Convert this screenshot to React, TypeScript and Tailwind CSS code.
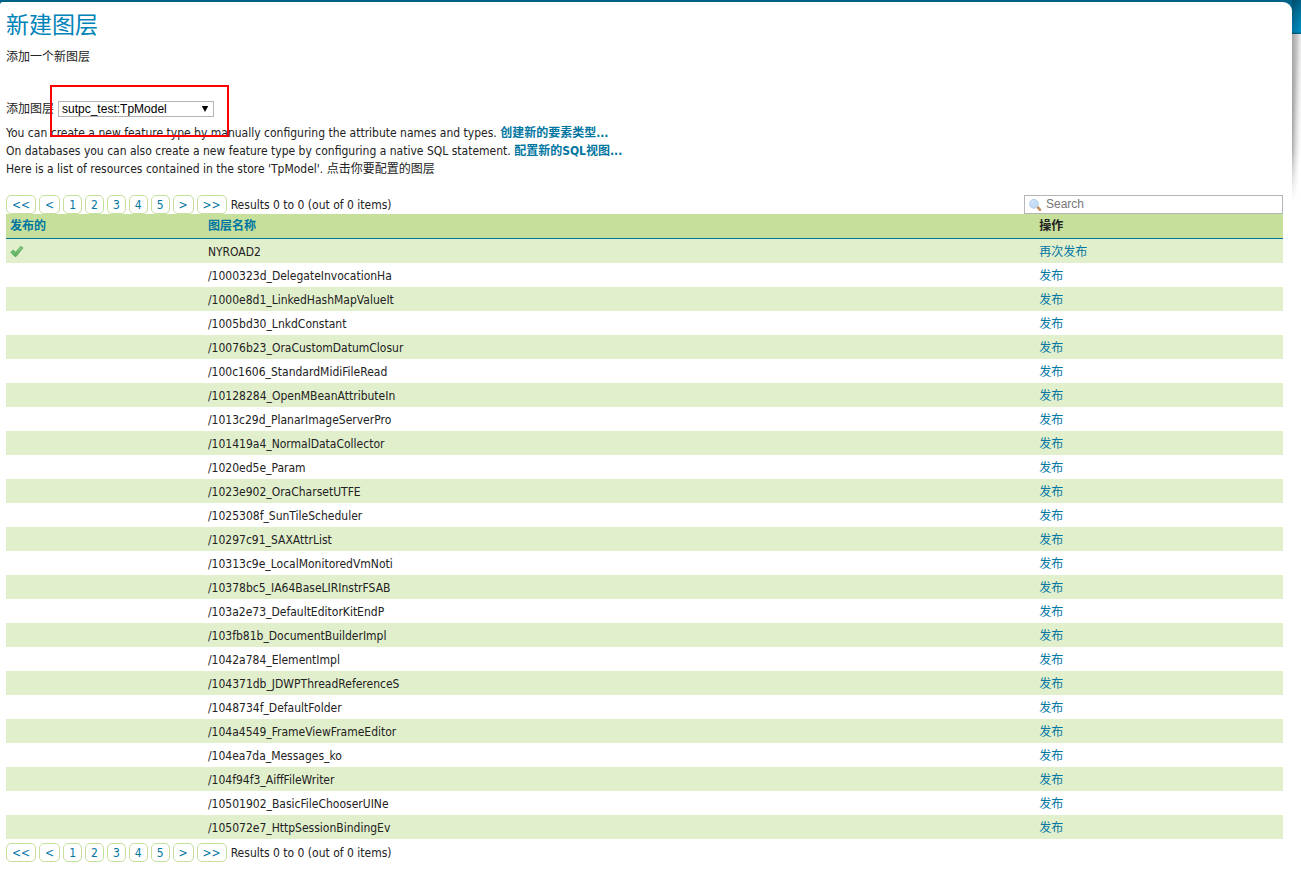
type Layer = { name: string; published?: boolean };

const layers: Layer[] = [
  { name: "NYROAD2", published: true },
  { name: "/1000323d_DelegateInvocationHa" },
  { name: "/1000e8d1_LinkedHashMapValueIt" },
  { name: "/1005bd30_LnkdConstant" },
  { name: "/10076b23_OraCustomDatumClosur" },
  { name: "/100c1606_StandardMidiFileRead" },
  { name: "/10128284_OpenMBeanAttributeIn" },
  { name: "/1013c29d_PlanarImageServerPro" },
  { name: "/101419a4_NormalDataCollector" },
  { name: "/1020ed5e_Param" },
  { name: "/1023e902_OraCharsetUTFE" },
  { name: "/1025308f_SunTileScheduler" },
  { name: "/10297c91_SAXAttrList" },
  { name: "/10313c9e_LocalMonitoredVmNoti" },
  { name: "/10378bc5_IA64BaseLIRInstrFSAB" },
  { name: "/103a2e73_DefaultEditorKitEndP" },
  { name: "/103fb81b_DocumentBuilderImpl" },
  { name: "/1042a784_ElementImpl" },
  { name: "/104371db_JDWPThreadReferenceS" },
  { name: "/1048734f_DefaultFolder" },
  { name: "/104a4549_FrameViewFrameEditor" },
  { name: "/104ea7da_Messages_ko" },
  { name: "/104f94f3_AiffFileWriter" },
  { name: "/10501902_BasicFileChooserUINe" },
  { name: "/105072e7_HttpSessionBindingEv" },
];

const pages = ["<<", "<", "1", "2", "3", "4", "5", ">", ">>"];

function Pager() {
  return (
    <nav className="flex items-center gap-[3px]">
      {pages.map((p) => (
        <a
          key={p}
          href="#"
          className="rounded-[5px] border border-[#c6e09b] px-[5px] pt-px leading-4 text-[#0076a1]"
        >
          {p}
        </a>
      ))}
      <span className="pl-px">Results 0 to 0 (out of 0 items)</span>
    </nav>
  );
}

function CheckIcon() {
  return (
    <svg viewBox="0 0 16 16" className="block size-4" role="img" aria-label="已发布">
      <defs>
        <linearGradient id="tick" x1="0" y1="0" x2="0" y2="1">
          <stop offset="0" stopColor="#8fd08a" />
          <stop offset="1" stopColor="#4fae52" />
        </linearGradient>
      </defs>
      <path
        d="M0.8 8.2 L3.2 6.1 L5.6 8.2 L10.8 2.3 L13 3.9 L6 12.6 L5 12.6 Z"
        fill="url(#tick)"
        stroke="#56a459"
        strokeWidth="0.8"
        strokeLinejoin="round"
      />
    </svg>
  );
}

function SearchIcon() {
  return (
    <svg viewBox="0 0 16 16" className="size-4" aria-hidden="true">
      <path d="M9.6 10.2 L12 12.8" stroke="#c4905a" strokeWidth="2.6" strokeLinecap="round" />
      <circle cx="6" cy="6.8" r="4.4" fill="#c6dcf5" stroke="#b5cdea" strokeWidth="1" />
      <path d="M3.6 6.4 A2.6 2.6 0 0 1 6.4 4.2" fill="none" stroke="#e6f1fc" strokeWidth="1" />
    </svg>
  );
}

export default function App() {
  return (
    <div className="flex bg-[linear-gradient(#005f85_0,#00668d_3px,#0083b3_20px,#008fc4_32px,#00678f_33px)] bg-[length:100%_34px] bg-no-repeat font-['DejaVu_Sans_Condensed','Noto_Sans_CJK_SC',sans-serif] text-xs leading-[18px] text-[#222]">
      <main className="mt-[2px] min-w-0 flex-1 rounded-tl-[3px] rounded-tr-[9px] bg-white pr-[9px] pb-2 pl-[6px]">
        <h1 className="pt-[6px] text-[23px] leading-[34px] text-[#0083b8]">新建图层</h1>
        <p className="mt-[6px]">添加一个新图层</p>

        <div className="mt-[34px] flex items-center gap-1">
          <label htmlFor="store">添加图层</label>
          <div className="relative">
            <select
              id="store"
              className="block h-4 w-[156px] appearance-none border border-[#b5b5b5] bg-white pl-[3px] font-['Liberation_Sans',sans-serif] text-xs leading-[14px] text-black"
            >
              <option>sutpc_test:TpModel</option>
            </select>
            <svg
              viewBox="0 0 8 6"
              className="pointer-events-none absolute top-[5px] right-[5px] h-[6px] w-2"
              aria-hidden="true"
            >
              <path d="M0.8 0 H7.2 L4 6 Z" fill="#000" />
            </svg>
            <div className="pointer-events-none absolute -top-4 -left-2 h-[52px] w-[179px] border-2 border-[#ff0000]" />
          </div>
        </div>

        <p className="mt-[6px]">
          You can create a new feature type by manually configuring the attribute names and types.{" "}
          <a href="#" className="font-bold text-[#0076a1]">
            创建新的要素类型...
          </a>
        </p>
        <p>
          On databases you can also create a new feature type by configuring a native SQL statement.{" "}
          <a href="#" className="font-bold text-[#0076a1]">
            配置新的SQL视图...
          </a>
        </p>
        <p>Here is a list of resources contained in the store 'TpModel'. 点击你要配置的图层</p>

        <div className="mt-[17px] flex items-center justify-between">
          <Pager />
          <label className="flex h-[19px] w-[259px] items-center gap-[2px] border border-[#b5b5b5] bg-white pl-[3px]">
            <SearchIcon />
            <input
              type="text"
              placeholder="Search"
              aria-label="Search"
              className="min-w-0 flex-1 bg-transparent pb-px font-['Liberation_Sans',sans-serif] text-xs leading-4 outline-none placeholder:text-[#777]"
            />
          </label>
        </div>

        <table className="w-full table-fixed border-separate border-spacing-0 text-left">
          <colgroup>
            <col className="w-[15.5%]" />
            <col className="w-[65.1%]" />
            <col />
          </colgroup>
          <thead>
            <tr className="h-[25px] bg-[#c6e09b]">
              <th className="border-b border-[#0076a1] px-1 py-0">
                <a href="#" className="text-[#0076a1]">
                  发布的
                </a>
              </th>
              <th className="border-b border-[#0076a1] px-1 py-0">
                <a href="#" className="text-[#0076a1]">
                  图层名称
                </a>
              </th>
              <th className="border-b border-[#0076a1] px-1 py-0">操作</th>
            </tr>
          </thead>
          <tbody>
            {layers.map((layer) => (
              <tr key={layer.name} className="h-6 odd:bg-[#e1efcd]">
                <td className="px-1 pt-[2px] pb-0">{layer.published && <CheckIcon />}</td>
                <td className="px-1 pt-[2px] pb-0">{layer.name}</td>
                <td className="px-1 pt-[2px] pb-0">
                  <a href="#" className="text-[#0076a1]">
                    {layer.published ? "再次发布" : "发布"}
                  </a>
                </td>
              </tr>
            ))}
          </tbody>
        </table>

        <div className="mt-1">
          <Pager />
        </div>
      </main>

      <div className="w-[9px] shrink-0" aria-hidden="true">
        <div className="h-[34px] bg-[linear-gradient(90deg,#00000033,#00000000)]" />
        <div className="h-[168px] bg-[linear-gradient(to_bottom_right,#ffffff00_30%,#ffffff_85%),linear-gradient(90deg,#a4a4a4,#e2e2e2)] [mask-image:linear-gradient(#000_70%,transparent)]" />
      </div>
    </div>
  );
}
